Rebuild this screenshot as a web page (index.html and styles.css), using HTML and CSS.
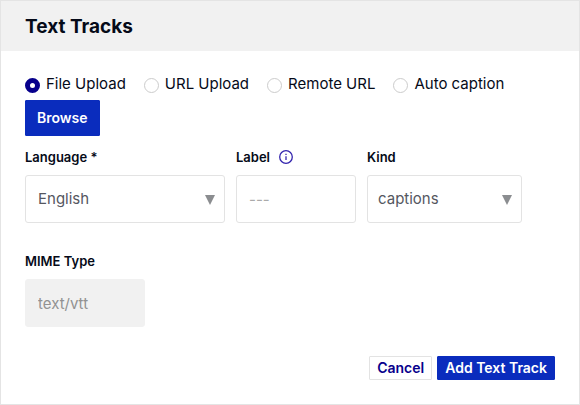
FILE: index.html
```html
<!DOCTYPE html>
<html lang="en">
<head>
<meta charset="utf-8">
<meta name="viewport" content="width=device-width, initial-scale=1">
<title>Text Tracks</title>
<link rel="stylesheet" href="styles.css">
</head>
<body>
<main class="dialog">
  <header class="dialog-header"><h1>Text Tracks</h1></header>
  <form class="dialog-body">
    <div class="sources" role="radiogroup" aria-label="Source">
      <label class="source"><input type="radio" name="source" checked>File Upload</label>
      <label class="source"><input type="radio" name="source">URL Upload</label>
      <label class="source"><input type="radio" name="source">Remote URL</label>
      <label class="source"><input type="radio" name="source">Auto caption</label>
    </div>
    <button class="button browse" type="button">Browse</button>
    <div class="fields">
      <div class="field">
        <label for="language">Language *</label>
        <div class="select">
          <select id="language"><option>English</option></select>
          <svg class="arrow" viewBox="0 0 10 10" aria-hidden="true"><path d="M0 0H10L5 10Z"/></svg>
        </div>
      </div>
      <div class="field">
        <div class="label-row">
          <label for="label">Label</label>
          <svg class="info" viewBox="0 0 14 14" aria-hidden="true"><circle cx="7" cy="7" r="6.3"/><path d="M7 6.2V10M7 3.8V5"/></svg>
        </div>
        <input class="control" id="label" type="text" placeholder="---">
      </div>
      <div class="field">
        <label for="kind">Kind</label>
        <div class="select">
          <select class="compact" id="kind"><option>captions</option></select>
          <svg class="arrow" viewBox="0 0 10 10" aria-hidden="true"><path d="M0 0H10L5 10Z"/></svg>
        </div>
      </div>
    </div>
    <div class="field mime">
      <label for="mime">MIME Type</label>
      <input class="control" id="mime" type="text" value="text/vtt" disabled>
    </div>
    <footer class="actions">
      <button class="button cancel" type="button">Cancel</button>
      <button class="button" type="submit">Add Text Track</button>
    </footer>
  </form>
</main>
</body>
</html>
```
FILE: styles.css
```css
* {
  box-sizing: border-box;
}

body {
  margin: 0;
  background: #fff;
  color: #050a18;
  font: 15px/20px Inter, "Liberation Sans", sans-serif;
}

input,
select,
button {
  margin: 0;
  font: inherit;
}

.dialog {
  min-height: 100vh;
  border: 1px solid #e4e4e4;
}

.dialog-header {
  padding: 14px 24px 12px;
  background: #f1f1f1;
}

h1 {
  margin: 0;
  font-size: 19px;
  line-height: 24px;
  font-weight: 700;
}

.dialog-body {
  padding: 23px 24px 24px;
}

.sources {
  display: flex;
  flex-wrap: wrap;
  gap: 4px 18px;
}

.source {
  display: flex;
  align-items: center;
  gap: 6px;
}

.source input {
  appearance: none;
  width: 15px;
  height: 15px;
  margin-top: 3px;
  border: 1px solid #ccc;
  border-radius: 50%;
  background: #fff;
}

.source input:checked {
  border: 5px solid #07008c;
}

.button {
  height: 24px;
  padding: 0 7px;
  border: 1px solid #0a2cbd;
  border-radius: 1px;
  background: #0a2cbd;
  color: #fff;
  font-size: 14px;
  line-height: 20px;
  font-weight: 600;
}

.browse {
  display: block;
  height: 36px;
  margin: 6px 0 12px;
  padding: 0 11px;
}

.fields {
  display: grid;
  grid-template-columns: 200fr 120fr 155fr 22fr;
  gap: 11px;
}

.field {
  display: flex;
  flex-direction: column;
  gap: 8px;
  min-width: 0;
}

.field label {
  font-size: 13px;
  line-height: 19px;
  font-weight: 600;
}

.label-row {
  display: flex;
  gap: 9px;
}

.info {
  width: 14px;
  height: 14px;
  margin-top: 2px;
  fill: none;
  stroke: #3425ae;
  stroke-width: 1.3;
}

.control,
.select select {
  width: 100%;
  height: 48px;
  padding: 0 12px;
  border: 1px solid #e3e3e3;
  border-radius: 3px;
  background: #fff;
  color: #55575f;
}

.control::placeholder {
  color: #aaa;
  opacity: 1;
}

.control:disabled {
  border-color: #f1f1f1;
  background: #f1f1f1;
  color: #929292;
}

.select {
  position: relative;
}

.select select {
  display: block;
  appearance: none;
}

.select .compact {
  padding: 0 10px;
}

.arrow {
  position: absolute;
  top: 20px;
  right: 10px;
  width: 10px;
  height: 10px;
  fill: #8b8d90;
  pointer-events: none;
}

.mime {
  width: 120px;
  margin-top: 29px;
}

.actions {
  display: flex;
  justify-content: flex-end;
  gap: 5px;
  margin-top: 29px;
}

.cancel {
  border-color: #e3e3e3;
  background: #fff;
  color: #07008c;
}
```
